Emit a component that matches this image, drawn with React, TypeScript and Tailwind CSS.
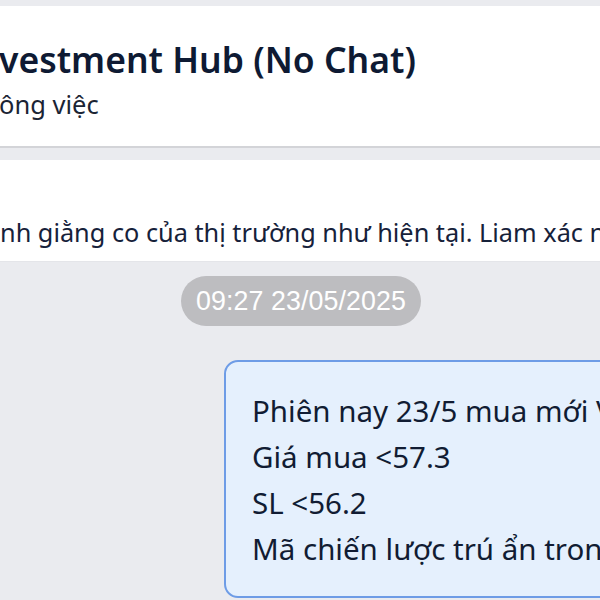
import React from "react";

export default function App() {
  const font = { fontFamily: '"Noto Sans", "Open Sans", sans-serif' };
  return (
    <div
      className="w-[600px] h-[600px] overflow-hidden bg-[#eaebef] flex flex-col pt-[6px]"
      style={font}
    >
      {/* Header */}
      <div className="h-[142px] shrink-0 bg-white border-b-2 border-[#d3d4d8] flex flex-col pt-[27px] overflow-hidden">
        <div className="whitespace-nowrap text-[35.5px] leading-[52px] font-semibold text-[#0e1a33] -ml-[1px]">
          vestment Hub (No Chat)
        </div>
        <div className="whitespace-nowrap text-[25.5px] leading-[34px] text-[#1b2434] mt-[2px] -ml-[1px]">
          ông việc
        </div>
      </div>

      {/* Pinned */}
      <div className="mt-[12px] h-[102px] shrink-0 bg-white border-b border-[#e4e5e9] flex items-end pb-[12px] overflow-hidden">
        <div className="whitespace-nowrap text-[25.3px] leading-[34px] text-[#16213a]">
          nh giằng co của thị trường như hiện tại. Liam xác nhận
        </div>
      </div>

      {/* Chat */}
      <div className="flex flex-col">
        <div className="mt-[14px] self-center ml-[2px] h-[50px] w-[240px] rounded-full bg-[#bdbdc0] flex items-center justify-center">
          <span className="text-white text-[26.8px] tracking-[0.1px]" style={{ fontFamily: '"Liberation Sans", Arial, sans-serif' }}>
            09:27 23/05/2025
          </span>
        </div>
        <div className="mt-[34px] ml-[224px] w-[520px] h-[238px] shrink-0 rounded-[14px] border-2 border-[#6e9ce6] bg-[#e5f0fd] pl-[26px] pt-[26px] overflow-hidden">
          <div className="whitespace-nowrap text-[29.5px] leading-[46px] text-[#111c33]">
            <div>Phiên nay 23/5 mua mới VNM</div>
            <div>Giá mua &lt;57.3</div>
            <div>SL &lt;56.2</div>
            <div>Mã chiến lược trú ẩn trong</div>
          </div>
        </div>
      </div>
    </div>
  );
}
